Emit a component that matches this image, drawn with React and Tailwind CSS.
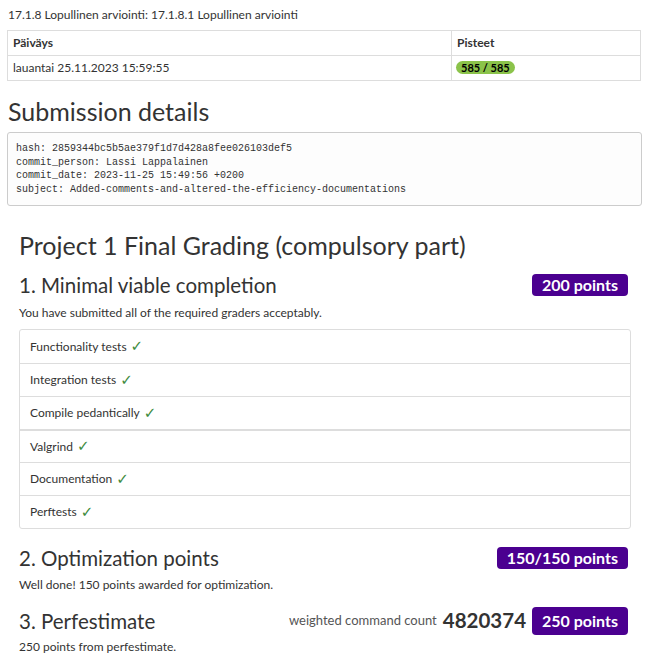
const tests = [
  "Functionality tests",
  "Integration tests",
  "Compile pedantically",
  "Valgrind",
  "Documentation",
  "Perftests",
];

function Badge({ children }) {
  return (
    <span className="inline-block bg-[#4b0090] text-white font-bold text-[16px] leading-none px-[10px] py-[3px] rounded-[4px]">
      {children}
    </span>
  );
}

export default function App() {
  return (
    <div className="min-h-screen bg-white text-[#333] font-['Lato',sans-serif] text-[12px] pt-[6px]">
      <div className="px-[8px] leading-[17px]">
        17.1.8 Lopullinen arviointi: 17.1.8.1 Lopullinen arviointi
      </div>

      {/* results table */}
      <table className="mx-[7px] mt-[7px] w-[634px] border-collapse border border-[#ddd]">
        <thead>
          <tr className="border-b border-[#ddd]">
            <th className="text-left font-bold px-[5px] h-[25px] border-r border-[#ddd]">Päiväys</th>
            <th className="text-left font-bold px-[5px] w-[189px]">Pisteet</th>
          </tr>
        </thead>
        <tbody>
          <tr>
            <td className="px-[5px] h-[25px] border-r border-[#ddd]">lauantai 25.11.2023 15:59:55</td>
            <td className="px-[4px]">
              <span className="inline-block bg-[#8bc34a] text-black font-bold text-[11px] leading-[13px] px-[5px] rounded-full">
                585 / 585
              </span>
            </td>
          </tr>
        </tbody>
      </table>

      <h2 className="px-[8px] mt-[15px] text-[25px] leading-[30px]">Submission details</h2>

      <pre className="mx-[7px] mt-[6px] border border-[#ccc] rounded-[3px] bg-[#fdfdfd] px-[8px] pt-[9px] pb-[9px] font-['Liberation_Mono',monospace] text-[10px] leading-[13.6px] text-[#333]">
        {`hash: 2859344bc5b5ae379f1d7d428a8fee026103def5
commit_person: Lassi Lappalainen
commit_date: 2023-11-25 15:49:56 +0200
subject: Added-comments-and-altered-the-efficiency-documentations`}
      </pre>

      <div className="pl-[19px] pr-[18px] mt-[24px]">
        <h1 className="text-[25px] leading-[30px]">Project 1 Final Grading (compulsory part)</h1>

        {/* 1 */}
        <div className="flex items-center justify-between mt-[12px] pr-[3px]">
          <h3 className="text-[20.5px] leading-[26px]">1. Minimal viable completion</h3>
          <Badge>200 points</Badge>
        </div>
        <p className="mt-[6px] text-[12px] leading-[17px]">You have submitted all of the required graders acceptably.</p>

        <ul className="mt-[8px] border border-[#ddd] rounded-[3px]">
          {tests.map((t, i) => (
            <li
              key={t}
              className={
                i === 0
                  ? "h-[33px] flex items-center px-[10px] text-[12px]"
                  : i === 3
                  ? "h-[33px] flex items-center px-[10px] text-[12px] border-t-2 border-[#ddd]"
                  : "h-[33px] flex items-center px-[10px] text-[12px] border-t border-[#ddd]"
              }
            >
              {t}
              <span className="ml-[4px] text-[#3d8b3d] font-bold text-[15px] leading-none font-['DejaVu_Sans',sans-serif]">✓</span>
            </li>
          ))}
        </ul>

        {/* 2 */}
        <div className="flex items-center justify-between mt-[16px] pr-[3px]">
          <h3 className="text-[20.5px] leading-[26px]">2. Optimization points</h3>
          <Badge>150/150 points</Badge>
        </div>
        <p className="mt-[5px] text-[12px] leading-[17px]">Well done! 150 points awarded for optimization.</p>

        {/* 3 */}
        <div className="flex items-center justify-between mt-[12px] pr-[3px]">
          <h3 className="text-[20.5px] leading-[26px]">3. Perfestimate</h3>
          <div className="flex items-center">
            <span className="text-[13px] text-[#555]">weighted command count</span>
            <span className="ml-[6px] mr-[6px] text-[20.5px] font-bold text-[#333]">4820374</span>
            <span className="inline-block bg-[#4b0090] text-white font-bold text-[16px] leading-none px-[10px] py-[6px] rounded-[4px]">
              250 points
            </span>
          </div>
        </div>
        <p className="mt-[2px] text-[12px] leading-[17px]">250 points from perfestimate.</p>
      </div>
    </div>
  );
}
